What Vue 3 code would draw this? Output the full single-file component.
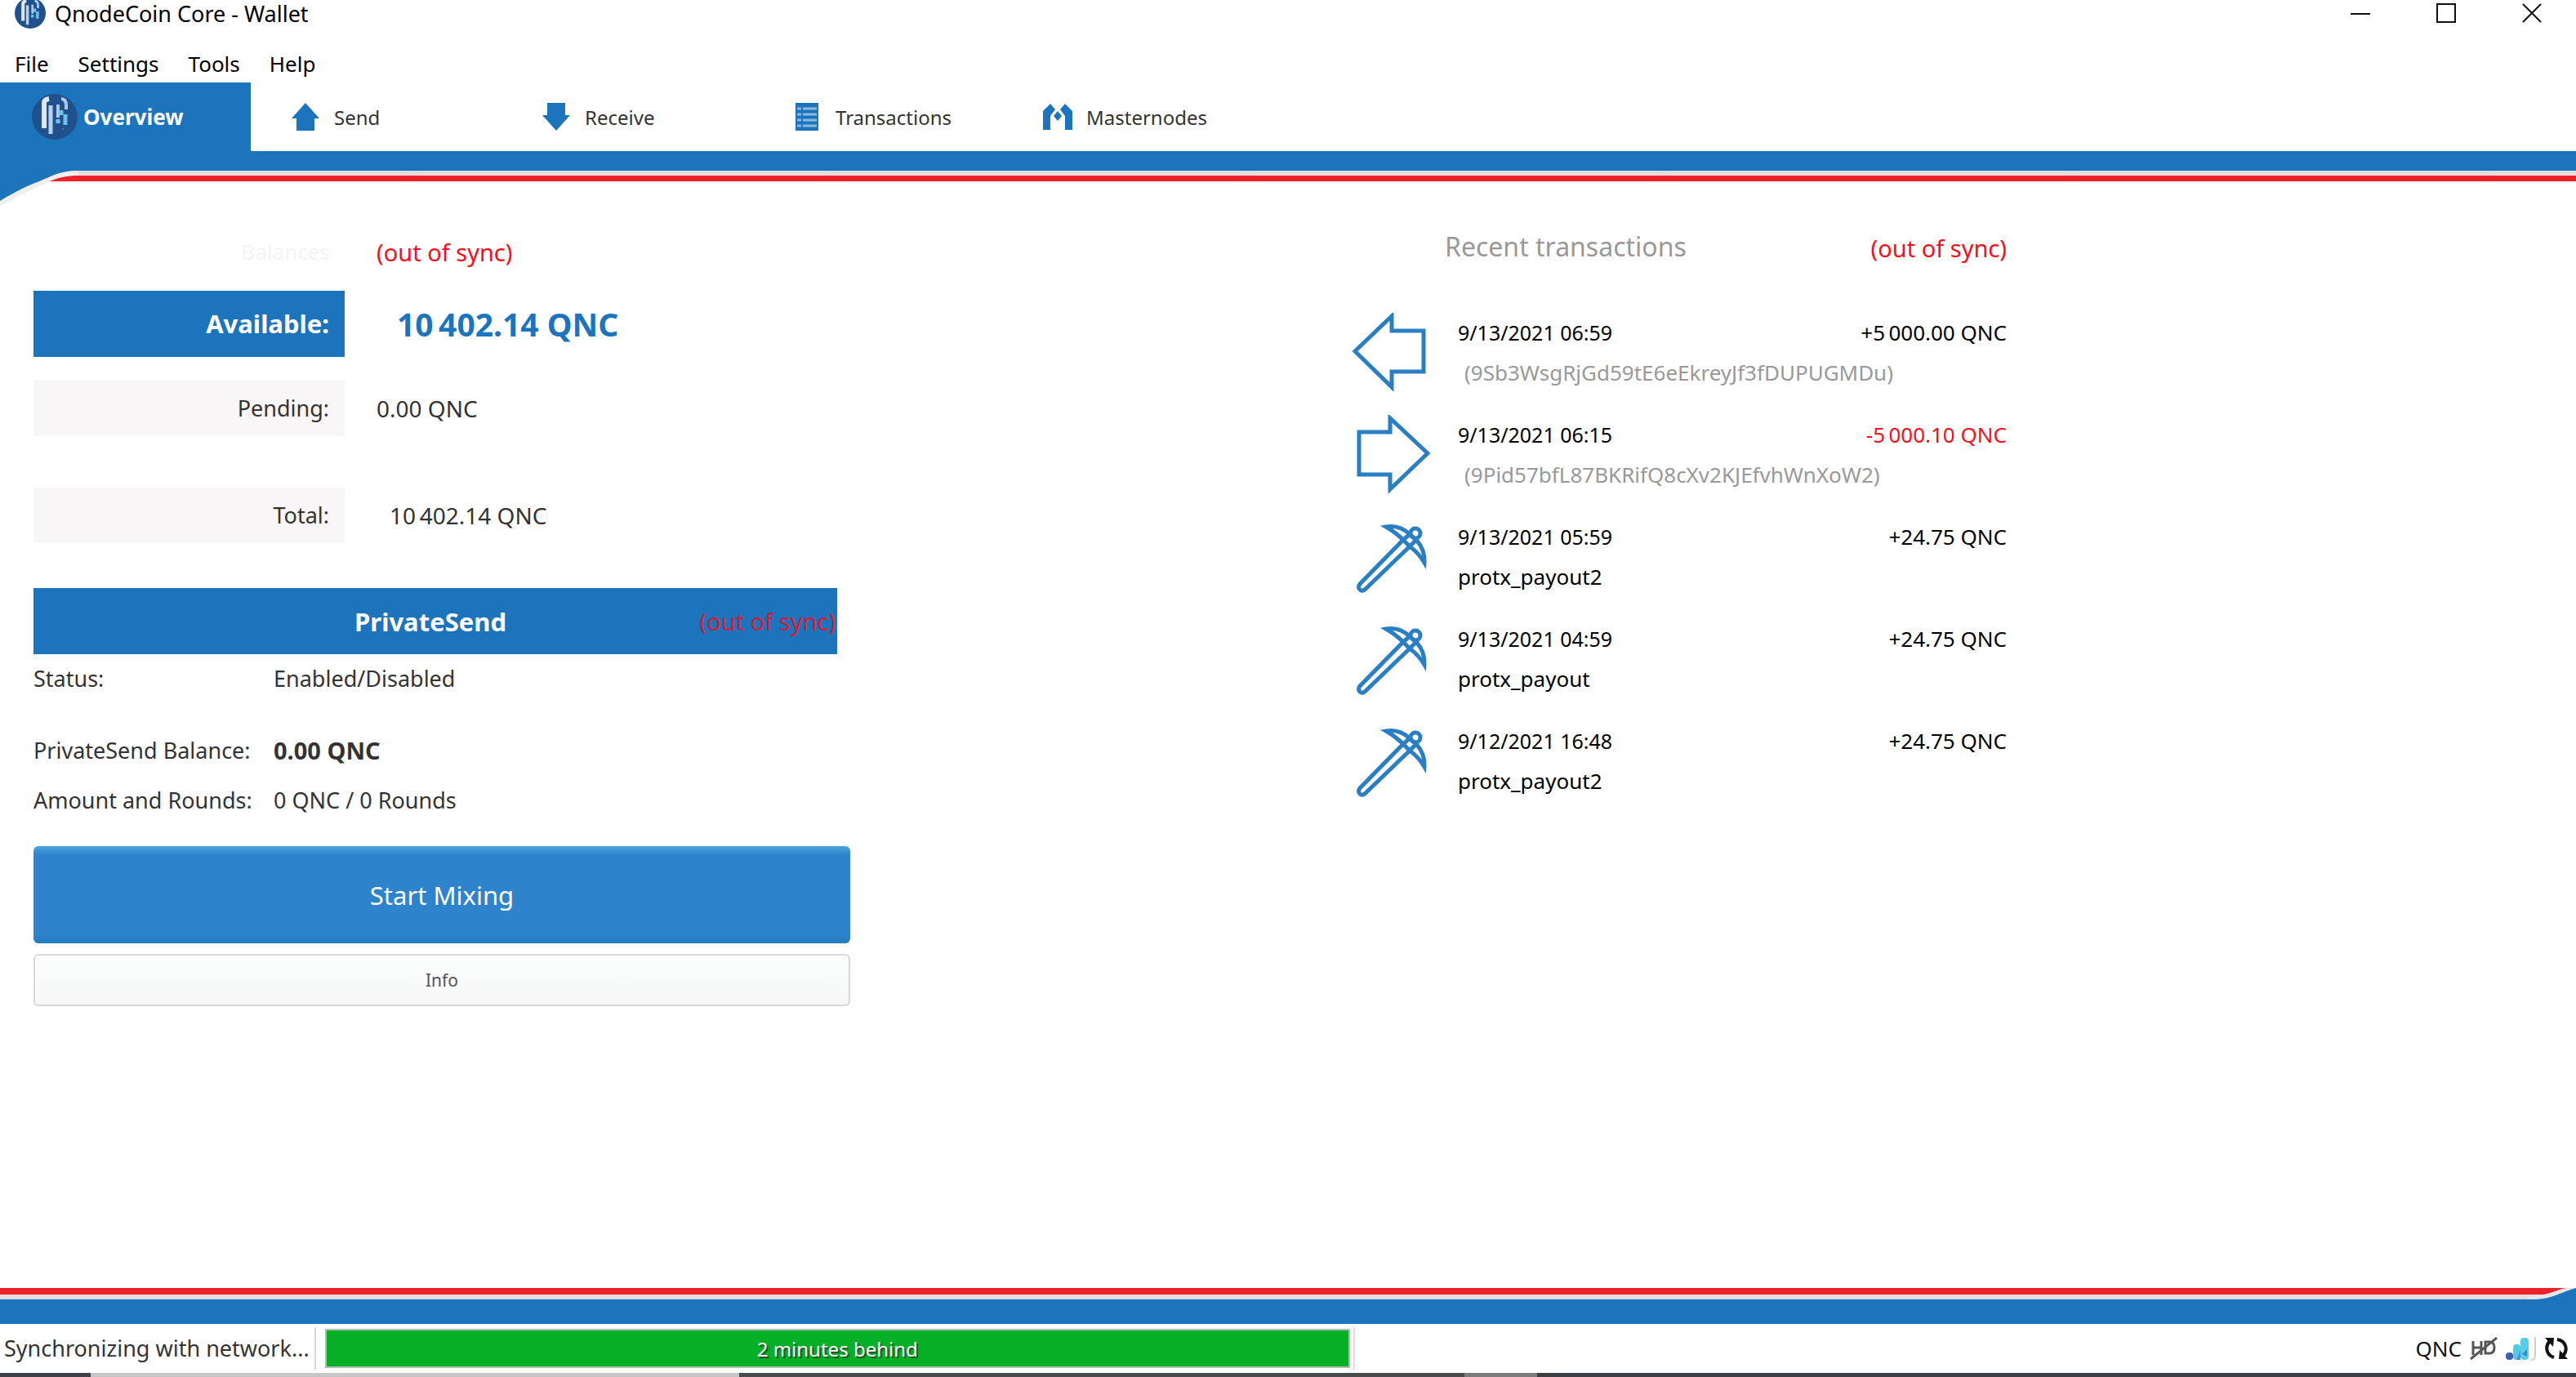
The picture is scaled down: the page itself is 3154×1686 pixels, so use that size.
<template>
  <div class="wallet">
    <header class="title-bar">
      <svg class="title-logo" viewBox="0 0 56 56" aria-hidden="true">
        <circle cx="28" cy="28" r="28" fill="#21518c" />
        <g fill="none">
          <path d="M15 42V11q0-4 6-5" stroke="#dfe6f2" stroke-width="6" />
          <path d="M23 14v35" stroke="#b4d3ec" stroke-width="5" />
          <path d="M32 13v16M36 6q6 0 6 8v5" stroke="#a9c9e6" stroke-width="4" />
          <path d="M41 25v13M36 20v6M32 31v5" stroke="#6fc0ee" stroke-width="5" />
        </g>
      </svg>
      <h1 class="title-text">QnodeCoin Core - Wallet</h1>
      <div class="window-controls">
        <button type="button" aria-label="Minimize">
          <svg viewBox="0 0 24 24"><path d="M0 13h24" /></svg>
        </button>
        <button type="button" aria-label="Maximize">
          <svg viewBox="0 0 24 24"><path d="M1 1h22v22H1z" /></svg>
        </button>
        <button type="button" aria-label="Close">
          <svg viewBox="0 0 24 24"><path d="M1 1l22 22M23 1L1 23" /></svg>
        </button>
      </div>
    </header>

    <nav class="menu-bar">
      <button v-for="item in menus" :key="item" type="button">{{ item }}</button>
    </nav>

    <nav class="tabs">
      <button
        v-for="tab in tabs"
        :key="tab.id"
        type="button"
        class="tab"
        :class="{ active: tab.id === activeTab }"
        @click="activeTab = tab.id"
      >
        <span class="tab-icon">
          <svg v-if="tab.id === 'overview'" width="56" height="56" viewBox="0 0 56 56">
            <circle cx="28" cy="28" r="28" fill="#21518c" />
            <g fill="none">
              <path d="M15 42V11q0-4 6-5" stroke="#dfe6f2" stroke-width="6" />
              <path d="M23 14v35" stroke="#b4d3ec" stroke-width="5" />
              <path d="M32 13v16M36 6q6 0 6 8v5" stroke="#a9c9e6" stroke-width="4" />
              <path d="M41 25v13M36 20v6M32 31v5" stroke="#6fc0ee" stroke-width="5" />
              <path d="M38 42v2" stroke="#5b6f9c" stroke-width="2" />
            </g>
          </svg>
          <svg v-else-if="tab.id === 'send'" width="34" height="34" viewBox="0 0 34 34">
            <path d="M17 0L34 19H28V34H6V19H0z" />
          </svg>
          <svg v-else-if="tab.id === 'receive'" width="34" height="34" viewBox="0 0 34 34">
            <path d="M6 0H28V15H34L17 34L0 15H6z" />
          </svg>
          <svg v-else-if="tab.id === 'transactions'" width="28" height="34" viewBox="0 0 28 34">
            <path d="M0 0H28V34H0z" />
            <path
              d="M2 7h5M9 7h17M2 14h5M9 14h17M2 21h5M9 21h17M2 28h5M9 28h17"
              stroke="#8db9de"
              stroke-width="3"
            />
          </svg>
          <svg v-else width="36" height="32" viewBox="0 0 36 32">
            <path d="M0 32V9L9 0l6 7-6 8v17z" />
            <path d="M36 32V9L27 0l-6 7 6 8v17z" />
            <path d="M18 9l5 6-5 6-5-6z" />
          </svg>
        </span>
        <span>{{ tab.label }}</span>
      </button>
    </nav>

    <div class="stripe stripe-top">
      <svg class="curve-top" width="96" height="68" viewBox="0 0 96 68" aria-hidden="true">
        <path d="M96 24C70 24 62 32 38 41C22 48 10 55 0 61V68C12 60 24 54 40 47C56 40 68 30 96 30z" fill="#efefef" />
        <path d="M0 0H96V24C70 24 62 32 38 41C22 48 10 55 0 61z" fill="#1c75bc" />
      </svg>
    </div>

    <main class="page">
      <section class="left">
        <div class="row row-head">
          <h2 class="balances-title">Balances</h2>
          <span class="sync">(out of sync)</span>
        </div>
        <dl class="balances">
          <div class="row row-available">
            <dt>Available:</dt>
            <dd>10&thinsp;402.14 QNC</dd>
          </div>
          <div class="row row-plain">
            <dt>Pending:</dt>
            <dd>0.00 QNC</dd>
          </div>
          <div class="row row-plain row-total">
            <dt>Total:</dt>
            <dd>10&thinsp;402.14 QNC</dd>
          </div>
        </dl>

        <div class="ps-banner">
          <h2>PrivateSend</h2>
          <span class="sync">(out of sync)</span>
        </div>
        <dl class="ps-info">
          <div class="ps-status">
            <dt>Status:</dt>
            <dd>Enabled/Disabled</dd>
          </div>
          <div>
            <dt>PrivateSend Balance:</dt>
            <dd><b>0.00 QNC</b></dd>
          </div>
          <div>
            <dt>Amount and Rounds:</dt>
            <dd>0 QNC / 0 Rounds</dd>
          </div>
        </dl>
        <button type="button" class="btn-mix">Start Mixing</button>
        <button type="button" class="btn-info">Info</button>
      </section>

      <section class="recent">
        <div class="recent-head">
          <h2>Recent transactions</h2>
          <span class="sync">(out of sync)</span>
        </div>
        <ul class="tx-list">
          <li v-for="tx in transactions" :key="tx.date" class="tx">
            <svg class="tx-icon" viewBox="0 0 96 96" aria-hidden="true">
              <path v-if="tx.type === 'in'" d="M4 47L49 4V22H88V72H49V91z" />
              <path v-else-if="tx.type === 'out'" d="M93 47L47 4V21H9V73H47V91z" />
              <g v-else>
                <path d="M63 28L10 82Q7 86 10 89T17 88L71 36" />
                <path d="M71 21L63 28L71 36L79 28z" />
                <path d="M63 28Q54 19 42 12Q58 9 71 21" />
                <path d="M71 36Q82 44 89 56Q90 40 79 28" />
                <circle cx="78" cy="20" r="6" />
              </g>
            </svg>
            <div class="tx-body">
              <div class="tx-line">
                <span class="tx-date">{{ tx.date }}</span>
                <span :class="{ negative: tx.type === 'out' }">{{ tx.amount }}</span>
              </div>
              <div class="tx-label" :class="{ address: tx.type !== 'mined' }">{{ tx.label }}</div>
            </div>
          </li>
        </ul>
      </section>
    </main>

    <div class="stripe stripe-bottom">
      <svg class="curve-bottom" width="60" height="44" viewBox="0 0 60 44" aria-hidden="true">
        <path d="M0 14V10C28 10 34 2 48 0H60V14z" fill="#e6e6e6" />
        <path d="M0 44V14C30 15 36 7 60 0V44z" fill="#1c75bc" />
      </svg>
    </div>

    <footer class="status-bar">
      <label class="status-text" for="sync-progress">Synchronizing with network...</label>
      <div class="progress-box">
        <progress id="sync-progress" value="100" max="100"></progress>
        <span class="progress-text">2 minutes behind</span>
      </div>
      <div class="status-icons">
        <span class="unit">QNC</span>
        <svg width="34" height="28" viewBox="0 0 34 28" aria-label="HD disabled">
          <g fill="none" stroke="#555" stroke-width="3">
            <path d="M4 5v17M14 5v17M4 13h10" />
            <path d="M19 6v14h5q6 0 6-7t-6-7z" />
            <path d="M1 27L33 1" />
          </g>
        </svg>
        <svg width="38" height="30" viewBox="0 0 38 30" aria-label="Network">
          <rect x="0" y="20" width="9" height="9" rx="4" fill="#3d5fb0" />
          <rect x="9" y="10" width="9" height="19" rx="4" fill="#56c8e4" />
          <path d="M18 17v12h-5z" fill="#5b8fd0" />
          <rect x="18" y="2" width="10" height="27" rx="4" fill="#56cfe6" />
          <path d="M20 22l6-6v9z" fill="#2a8fe0" />
          <path d="M36 1v24q0 4-5 4" fill="none" stroke="#d0d0d0" stroke-width="2" />
        </svg>
        <svg width="28" height="28" viewBox="0 0 28 28" aria-label="Syncing">
          <g fill="none" stroke="#111" stroke-width="4">
            <path d="M11 25C1 22 0 11 6 5" />
            <path d="M15 3C27 5 28 17 22 23" />
          </g>
          <path d="M0 1h11L10 12z" fill="#111" />
          <path d="M28 27H17L18 16z" fill="#111" />
        </svg>
      </div>
    </footer>
    <div class="desktop-edge"></div>
  </div>
</template>

<script setup>
import { ref } from 'vue';

const activeTab = ref('overview');

const menus = ['File', 'Settings', 'Tools', 'Help'];

const tabs = [
  { id: 'overview', label: 'Overview' },
  { id: 'send', label: 'Send' },
  { id: 'receive', label: 'Receive' },
  { id: 'transactions', label: 'Transactions' },
  { id: 'masternodes', label: 'Masternodes' },
];

const transactions = [
  { type: 'in', date: '9/13/2021 06:59', amount: '+5\u2009000.00 QNC', label: '(9Sb3WsgRjGd59tE6eEkreyJf3fDUPUGMDu)' },
  { type: 'out', date: '9/13/2021 06:15', amount: '-5\u2009000.10 QNC', label: '(9Pid57bfL87BKRifQ8cXv2KJEfvhWnXoW2)' },
  { type: 'mined', date: '9/13/2021 05:59', amount: '+24.75 QNC', label: 'protx_payout2' },
  { type: 'mined', date: '9/13/2021 04:59', amount: '+24.75 QNC', label: 'protx_payout' },
  { type: 'mined', date: '9/12/2021 16:48', amount: '+24.75 QNC', label: 'protx_payout2' },
];
</script>

<style>
body {
  margin: 0;
  background: #fff;
}
</style>

<style scoped>
.wallet {
  display: flex;
  flex-direction: column;
  min-height: 100vh;
  background: #fff;
  color: #333;
  font-family: 'Noto Sans', 'Open Sans', sans-serif;
  font-size: 27px;
}

button {
  padding: 0;
  border: none;
  background: none;
  color: inherit;
  font: inherit;
  cursor: pointer;
}

h1,
h2,
dl,
dd,
ul {
  margin: 0;
  padding: 0;
  font-weight: 400;
}

/* title bar */
.title-bar {
  display: flex;
  align-items: flex-start;
  height: 55px;
  padding-left: 18px;
  color: #000;
}
.title-logo {
  width: 38px;
  height: 38px;
  margin-top: -3px;
}
.title-text {
  flex: 1;
  margin-left: 11px;
  font-size: 27px;
  line-height: 34px;
}
.window-controls {
  display: flex;
  padding-right: 2px;
}
.window-controls button {
  display: flex;
  align-items: center;
  justify-content: center;
  width: 105px;
  height: 32px;
}
.window-controls svg {
  width: 24px;
  height: 24px;
  fill: none;
  stroke: #111;
  stroke-width: 2;
}

/* menu */
.menu-bar {
  display: flex;
  gap: 36px;
  height: 46px;
  padding-left: 18px;
  color: #000;
  font-size: 26px;
}

/* tabs */
.tabs {
  display: flex;
}
.tab {
  display: flex;
  align-items: center;
  gap: 6px;
  width: 307px;
  height: 84px;
  padding-left: 38px;
  font-size: 24px;
  text-align: left;
}
.tab.active {
  background: #1c75bc;
  color: #fff;
  font-size: 26px;
  font-weight: 700;
}
.tab-icon {
  display: flex;
  align-items: center;
  justify-content: center;
  width: 58px;
  fill: #1c75bc;
}

/* coloured bands */
.stripe {
  position: relative;
  flex: none;
}
.stripe-top {
  height: 37px;
  background: linear-gradient(#1c75bc 24px, #dcdfe3 24px, #ecdcdc 30px, #ee2029 30px);
}
.stripe-bottom {
  height: 44px;
  background: linear-gradient(#ee2029 8px, #ecdcdc 8px, #dcdfe3 14px, #1c75bc 14px);
}
.curve-top {
  position: absolute;
  top: 0;
  left: 0;
}
.curve-bottom {
  position: absolute;
  right: 0;
  bottom: 0;
}

/* page */
.page {
  display: grid;
  flex: 1;
  grid-template-columns: minmax(0, 1000fr) 614fr minmax(0, 802fr) 697fr;
  padding-left: 41px;
}
.left {
  display: flex;
  flex-direction: column;
  padding-top: 66px;
}
.recent {
  grid-column: 3;
  padding-top: 54px;
}
.sync {
  color: #fb0d1b;
  font-size: 29px;
}

.row {
  display: grid;
  grid-template-columns: 381px 1fr;
  column-gap: 39px;
  align-items: center;
}
.row-head {
  height: 40px;
  margin-bottom: 28px;
}
.balances-title {
  padding-right: 18px;
  color: #f4f4f4;
  font-size: 26px;
  text-align: right;
}
.balances dt {
  padding-right: 19px;
  text-align: right;
}
.balances dd {
  font-size: 28px;
}
.row-available dt {
  background: #1c75bc;
  color: #fff;
  font-size: 31px;
  font-weight: 700;
  line-height: 81px;
}
.row-available dd {
  padding-left: 25px;
  color: #1c75bc;
  font-size: 39px;
  font-weight: 700;
  line-height: 48px;
}
.row-plain {
  margin-top: 29px;
}
.row-plain dt {
  background: #f8f6f7;
  line-height: 68px;
}
.row-total {
  margin-top: 63px;
}
.row-total dd {
  padding-left: 16px;
}

.ps-banner {
  display: grid;
  align-items: center;
  height: 81px;
  margin: 55px 16px 0 0;
  background: #1c75bc;
}
.ps-banner > * {
  grid-area: 1 / 1;
}
.ps-banner h2 {
  padding-right: 12px;
  color: #fff;
  font-size: 31px;
  font-weight: 700;
  text-align: center;
}
.ps-banner .sync {
  justify-self: end;
  padding-right: 2px;
  color: #d81a36;
}

.ps-info > div {
  display: grid;
  grid-template-columns: 294px 1fr;
  line-height: 60px;
}
.ps-info .ps-status {
  margin-bottom: 28px;
}
.ps-info b {
  font-size: 29px;
}

.btn-mix {
  height: 119px;
  margin-top: 26px;
  border-radius: 6px;
  background: linear-gradient(#4ba3dd, #2d84cc 11px, #2d84cc 108px, #217dba);
  color: #fff;
  font-size: 31px;
}
.btn-info {
  height: 64px;
  margin-top: 13px;
  border: 2px solid #d8d8d8;
  border-radius: 6px;
  background: linear-gradient(#fcfdfd, #f7f7f7);
  color: #555;
  font-size: 21px;
}

/* recent transactions */
.recent-head {
  display: flex;
  align-items: flex-start;
  justify-content: space-between;
  height: 56px;
  padding-left: 114px;
  line-height: 56px;
}
.recent-head h2 {
  color: #999;
  font-size: 32px;
  line-height: 52px;
}
.tx-list {
  display: flex;
  flex-direction: column;
  gap: 27px;
  margin-top: 51px;
  list-style: none;
}
.tx {
  display: flex;
  align-items: flex-start;
  height: 98px;
  color: #000;
  font-size: 26px;
  line-height: 49px;
}
.tx-icon {
  flex: none;
  width: 96px;
  height: 96px;
  fill: none;
  stroke: #2a7fc4;
  stroke-width: 5;
}
.tx-body {
  flex: 1;
  margin-left: 34px;
}
.tx-line {
  display: flex;
  justify-content: space-between;
}
.tx-date {
  font-size: 25px;
}
.negative {
  color: #fb0d1b;
}
.address {
  padding-left: 8px;
  color: #999;
}

/* status bar */
.status-bar {
  display: flex;
  align-items: center;
  height: 60px;
}
.status-text {
  box-sizing: border-box;
  width: 387px;
  padding-left: 5px;
  border-right: 2px solid #d7d7d7;
  line-height: 52px;
  white-space: nowrap;
}
.progress-box {
  display: grid;
  flex: 1260;
  align-items: center;
  margin: 0 4px 0 11px;
}
.progress-box > * {
  grid-area: 1 / 1;
}
progress {
  box-sizing: border-box;
  width: 100%;
  height: 48px;
  border: 2px solid #b4bdb4;
  background: #fff;
  appearance: none;
}
progress::-webkit-progress-bar {
  background: #fff;
}
progress::-webkit-progress-value {
  background: #06b025;
}
.progress-text {
  z-index: 1;
  color: #fff;
  font-size: 24px;
  text-align: center;
  text-shadow: 2px 2px 1px #2a4a2a;
}
.status-icons {
  display: flex;
  flex: 1492;
  align-items: center;
  justify-content: flex-end;
  gap: 10px;
  height: 52px;
  padding-right: 10px;
  border-left: 2px solid #e0e0e0;
}
.unit {
  color: #111;
  font-size: 26px;
}

.desktop-edge {
  height: 5px;
  background: linear-gradient(
    90deg,
    #3c4148 111px,
    #c8c8c8 111px 905px,
    #484a4c 905px 1793px,
    #7c7c7c 1793px 1882px,
    #3a3e42 1882px
  );
}
</style>
